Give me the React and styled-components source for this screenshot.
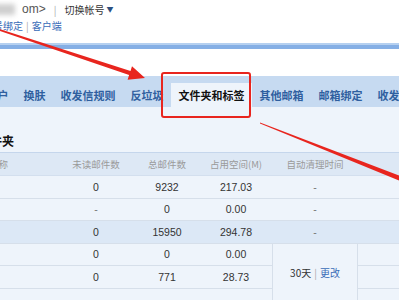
import React from 'react';
import styled, { createGlobalStyle } from 'styled-components';

const GlobalStyle = createGlobalStyle`
  html, body {
    margin: 0;
    padding: 0;
    background: #fff;
    overflow: hidden;
  }
  body {
    font-family: "Noto Sans CJK SC", "Liberation Sans", sans-serif;
  }
`;

const Page = styled.div`
  position: relative;
  width: 399px;
  height: 300px;
  overflow: hidden;
`;

// the screenshot is cropped on the left, so the page runs off-screen a bit
const Canvas = styled.div`
  margin-left: -40px;
  width: 480px;
`;

const TopBar = styled.div`
  height: 43px;
  padding: 1px 0 0 33px;
  box-sizing: border-box;
  font-size: 10px;
  color: #333;
`;

const TopLine = styled.div`
  display: flex;
  align-items: center;
  height: 16px;
  white-space: nowrap;
`;

const Blurred = styled.span`
  display: inline-block;
  width: 22px;
  height: 11px;
  background: #cfcfcf;
  filter: blur(2.5px);
  margin-right: 7px;
`;

const Mail = styled.span`
  font-family: "Liberation Sans", sans-serif;
  font-size: 12px;
  color: #555;
`;

const Sep = styled.span`
  color: #aaa;
  margin: 0 ${(p) => p.$gap || 3}px;
`;

const Link = styled.a`
  color: #3a6cb8;
  text-decoration: none;
`;

const Caret = styled.span`
  font-size: 7px;
  color: #2c4f80;
  margin-left: 2px;
`;

const BlueRule = styled.div`
  height: 4px;
  border-top: 2px solid #b5d0f0;
  background: #85afe5;
`;

const Gap = styled.div`
  height: 27px;
`;

const TabBar = styled.div`
  height: 31px;
  background: #c6daf1;
  display: flex;
  align-items: flex-end;
  padding-left: 19px;
`;

const Tab = styled.div`
  height: 24px;
  line-height: 24px;
  padding: 0 7.5px;
  font-size: 11px;
  font-weight: 700;
  white-space: nowrap;
  color: ${(p) => (p.$active ? '#111' : '#2f5f9f')};
  background: ${(p) => (p.$active ? '#eef4fb' : 'transparent')};
`;

const Content = styled.div`
  background: #eef4fb;
  height: 200px;
`;

const Title = styled.div`
  height: 45px;
  display: flex;
  align-items: flex-end;
  padding: 0 0 1px 18px;
  box-sizing: border-box;
  font-size: 12px;
  font-weight: 700;
  line-height: 20px;
  color: #111;
`;

const Table = styled.div`
  display: grid;
  grid-template-columns: 98px 76px 66px 72px 86px 1fr;
`;

const HeadCell = styled.div`
  height: 24px;
  box-sizing: border-box;
  border-top: 1px solid #c5d6ec;
  border-bottom: 1px solid #d3dfee;
  background: #dde8f5;
  color: #9a9a9a;
  font-size: 9.5px;
  display: flex;
  align-items: center;
  justify-content: ${(p) => (p.$left ? 'flex-start' : 'center')};
  padding-left: ${(p) => (p.$left ? '29px' : '0')};
  white-space: nowrap;
`;

const Cell = styled.div`
  height: 22.5px;
  box-sizing: border-box;
  border-bottom: 1px solid #d6dfea;
  background: ${(p) => (p.$hl ? '#dce8f6' : 'transparent')};
  font-family: "Liberation Sans", sans-serif;
  font-size: 10.5px;
  color: ${(p) => (p.$dim ? '#777' : '#333')};
  display: flex;
  align-items: center;
  justify-content: center;
`;

const MergedCell = styled.div`
  grid-row: span 3;
  border-left: 1px solid #d6dfea;
  border-right: 1px solid #d6dfea;
  display: flex;
  align-items: center;
  justify-content: center;
  padding-bottom: 10px;
  box-sizing: border-box;
  font-size: 10px;
  color: #333;
  white-space: nowrap;
`;

const Overlay = styled.svg`
  position: absolute;
  left: 0;
  top: 0;
  pointer-events: none;
`;

const rows = [
  { unread: '0', total: '9232', size: '217.03', clean: '-' },
  { unread: '-', total: '0', size: '0.00', clean: '-' },
  { unread: '0', total: '15950', size: '294.78', clean: '-', hl: true },
  { unread: '0', total: '0', size: '0.00', merged: true },
  { unread: '0', total: '771', size: '28.73', skip: true },
  { unread: '', total: '', size: '', skip: true },
];

const tabs = ['账户', '换肤', '收发信规则', '反垃圾', '文件夹和标签', '其他邮箱', '邮箱绑定', '收发信设置'];

export default function App() {
  return (
    <Page>
      <GlobalStyle />
      <Canvas>
        <TopBar>
          <TopLine>
            <Blurred />
            <Mail>om&gt;</Mail>
            <Sep $gap={8}>|</Sep>
            <span>切换帐号</span>
            <Caret>▼</Caret>
          </TopLine>
          <TopLine>
            <Link>号绑定</Link>
            <Sep>|</Sep>
            <Link>客户端</Link>
          </TopLine>
        </TopBar>
        <BlueRule />
        <Gap />
        <TabBar>
          {tabs.map((t) => (
            <Tab key={t} $active={t === '文件夹和标签'}>{t}</Tab>
          ))}
        </TabBar>
        <Content>
          <Title>文件夹</Title>
          <Table>
            <HeadCell $left>名称</HeadCell>
            <HeadCell>未读邮件数</HeadCell>
            <HeadCell>总邮件数</HeadCell>
            <HeadCell>占用空间(M)</HeadCell>
            <HeadCell>自动清理时间</HeadCell>
            <HeadCell />
            {rows.map((r, i) => (
              <React.Fragment key={i}>
                <Cell $hl={r.hl} />
                <Cell $hl={r.hl} $dim={r.unread === '-'}>{r.unread}</Cell>
                <Cell $hl={r.hl}>{r.total}</Cell>
                <Cell $hl={r.hl}>{r.size}</Cell>
                {r.merged && (
                  <MergedCell>
                    30天<Sep>|</Sep><Link>更改</Link>
                  </MergedCell>
                )}
                {!r.merged && !r.skip && <Cell $hl={r.hl} $dim>{r.clean}</Cell>}
                <Cell $hl={r.hl} />
              </React.Fragment>
            ))}
          </Table>
        </Content>
      </Canvas>
      <Overlay width="399" height="300" viewBox="0 0 399 300">
        <polygon
          fill="#e8251e"
          points="0.3,29.2 130.5,70.9 132,66.3 145,78 127.6,79.7 129.1,75.1 -0.3,30.8"
        />
        <rect x="162" y="73" width="88" height="44" rx="2" fill="none" stroke="#e8251e" strokeWidth="2" />
        <polygon fill="#e8251e" points="260,122.6 399,175.5 399,180.5 260,123.4" />
      </Overlay>
    </Page>
  );
}
